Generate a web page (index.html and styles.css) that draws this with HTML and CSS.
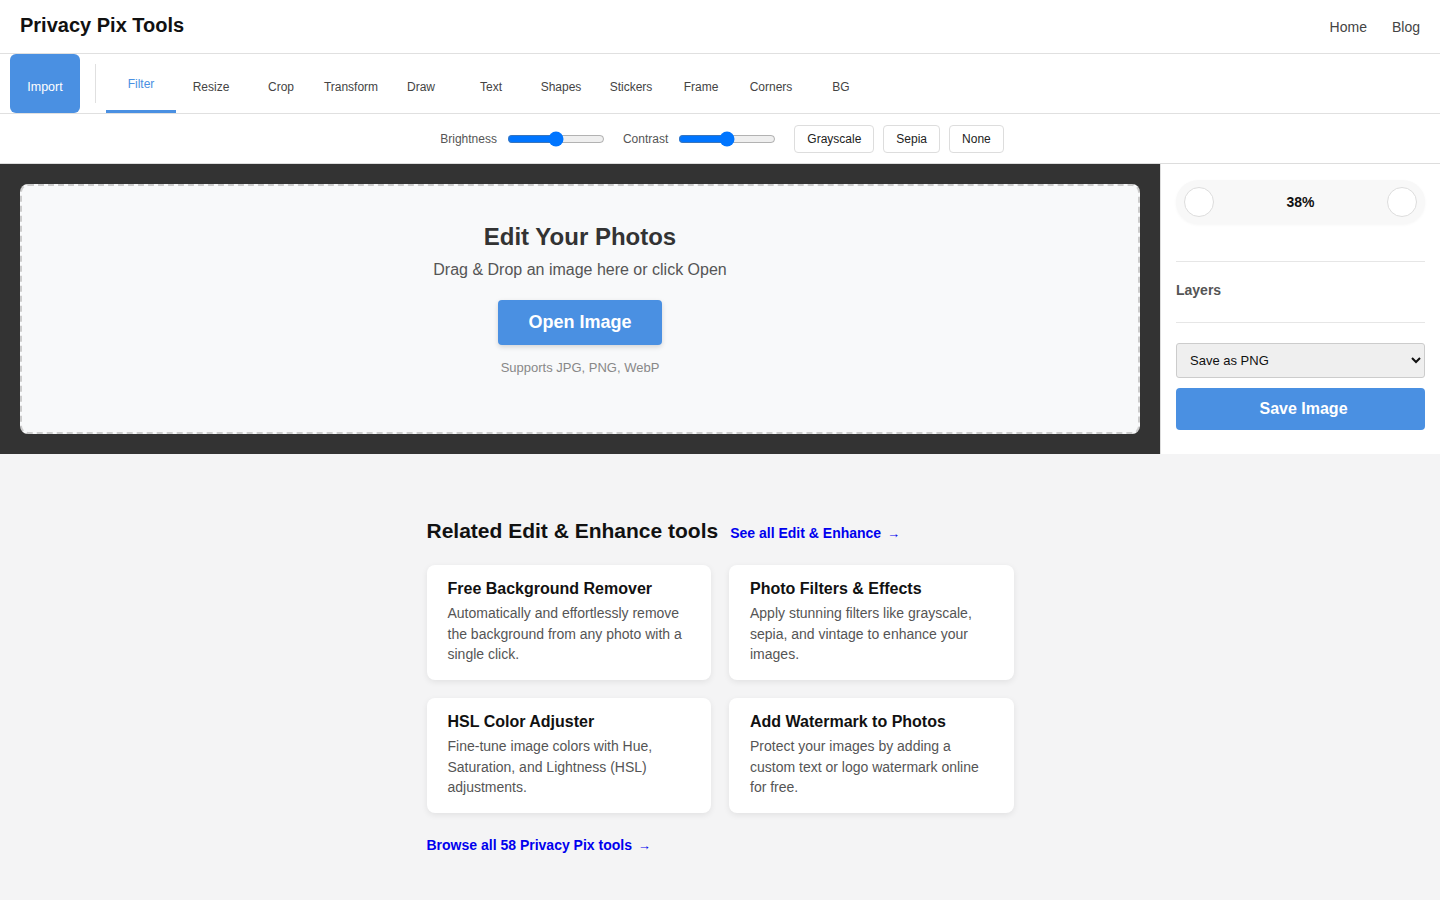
FILE: index.html
```html
<!DOCTYPE html>
<html lang="en">
<head>
  <meta charset="UTF-8">
  <title>Privacy Pix Tools</title>
  <link rel="stylesheet" href="styles.css">
</head>
<body>
  <header class="site-header">
    <div class="brand">Privacy Pix Tools</div>
    <nav class="site-nav">
      <a href="#">Home</a>
      <a href="#">Blog</a>
    </nav>
  </header>

  <div class="toolbar">
    <button class="import-btn">Import</button>
    <div class="tool-sep"></div>
    <div class="tabs">
      <button class="tab active">Filter</button>
      <button class="tab">Resize</button>
      <button class="tab">Crop</button>
      <button class="tab">Transform</button>
      <button class="tab">Draw</button>
      <button class="tab">Text</button>
      <button class="tab">Shapes</button>
      <button class="tab">Stickers</button>
      <button class="tab">Frame</button>
      <button class="tab">Corners</button>
      <button class="tab">BG</button>
    </div>
  </div>

  <div class="filter-bar">
    <label class="filter-label">Brightness</label>
    <input type="range" class="slider" min="0" max="200" value="100">
    <label class="filter-label">Contrast</label>
    <input type="range" class="slider" min="0" max="200" value="100">
    <div class="preset-group">
      <button class="preset">Grayscale</button>
      <button class="preset">Sepia</button>
      <button class="preset">None</button>
    </div>
  </div>

  <main class="editor">
    <section class="canvas-area">
      <div class="dropzone">
        <h2>Edit Your Photos</h2>
        <p class="drop-sub">Drag &amp; Drop an image here or click Open</p>
        <button class="open-btn">Open Image</button>
        <p class="drop-note">Supports JPG, PNG, WebP</p>
      </div>
    </section>
    <aside class="sidebar">
      <div class="zoom-ctrl">
        <button class="zoom-btn"></button>
        <span class="zoom-val">38%</span>
        <button class="zoom-btn"></button>
      </div>
      <div class="layers">Layers</div>
      <select class="format-select">
        <option>Save as PNG</option>
        <option>Save as JPG</option>
        <option>Save as WebP</option>
      </select>
      <button class="save-btn">Save Image</button>
    </aside>
  </main>

  <section class="related">
    <div class="related-inner">
      <div class="related-head">
        <h2>Related Edit &amp; Enhance tools</h2>
        <a href="#" class="see-all">See all Edit &amp; Enhance <span class="arrow">→</span></a>
      </div>
      <div class="cards">
        <a href="#" class="card">
          <h3>Free Background Remover</h3>
          <p>Automatically and effortlessly remove the background from any photo with a single click.</p>
        </a>
        <a href="#" class="card">
          <h3>Photo Filters &amp; Effects</h3>
          <p>Apply stunning filters like grayscale, sepia, and vintage to enhance your images.</p>
        </a>
        <a href="#" class="card">
          <h3>HSL Color Adjuster</h3>
          <p>Fine-tune image colors with Hue, Saturation, and Lightness (HSL) adjustments.</p>
        </a>
        <a href="#" class="card">
          <h3>Add Watermark to Photos</h3>
          <p>Protect your images by adding a custom text or logo watermark online for free.</p>
        </a>
      </div>
      <a href="#" class="browse-all">Browse all 58 Privacy Pix tools <span class="arrow">→</span></a>
    </div>
  </section>
</body>
</html>
```

FILE: styles.css
```css
* {
  box-sizing: border-box;
}

body {
  margin: 0;
  font-family: "Liberation Sans", Arial, sans-serif;
  background-color: #f4f4f5;
  color: #333;
}

button {
  font-family: inherit;
}

.site-header {
  height: 54px;
  display: flex;
  align-items: center;
  justify-content: space-between;
  padding: 0 20px;
  background: #fff;
  border-bottom: 1px solid #e0e0e0;
}

.brand {
  font-size: 20px;
  font-weight: bold;
  color: #111;
  margin-top: -3px;
}

.site-nav {
  display: flex;
  gap: 25px;
}

.site-nav a {
  color: #444;
  text-decoration: none;
  font-size: 14px;
}

.toolbar {
  height: 60px;
  display: flex;
  align-items: stretch;
  background: #fff;
  border-bottom: 1px solid #e0e0e0;
  padding-left: 10px;
}

.import-btn {
  width: 70px;
  background-color: #4a90e2;
  color: #fff;
  border: none;
  border-radius: 6px;
  font-size: 12.5px;
  padding-top: 7px;
  cursor: pointer;
}

.tool-sep {
  width: 1px;
  background: #e0e0e0;
  margin: 10px 10px 10px 15px;
}

.tabs {
  display: flex;
}

.tab {
  width: 70px;
  background: none;
  border: none;
  border-bottom: 3px solid transparent;
  font-size: 12px;
  color: #444;
  padding-top: 10px;
  cursor: pointer;
}

.tab.active {
  color: #4a90e2;
  border-bottom-color: #4a90e2;
  padding-top: 4px;
}

.filter-bar {
  height: 50px;
  display: flex;
  align-items: center;
  justify-content: center;
  gap: 10px;
  background: #fff;
  border-bottom: 1px solid #ddd;
  padding-left: 4px;
}

.filter-label {
  font-size: 12px;
  color: #555;
  margin-left: 8px;
}

.filter-label:first-child {
  margin-left: 0;
}

.slider {
  width: 98px;
  margin: 0;
}

.preset-group {
  display: flex;
  gap: 9px;
  margin-left: 8px;
}

.preset {
  background: #fff;
  border: 1px solid #ddd;
  border-radius: 4px;
  font-size: 12px;
  color: #222;
  height: 28px;
  padding: 0 12px;
  cursor: pointer;
}

.editor {
  display: flex;
  height: 290px;
}

.canvas-area {
  flex: 1;
  background: #333;
  padding: 20px;
}

.dropzone {
  height: 100%;
  background: #f8f9fa;
  border: 2px dashed #ccc;
  border-radius: 8px;
  display: flex;
  flex-direction: column;
  align-items: center;
  padding-top: 37px;
}

.dropzone h2 {
  margin: 0;
  font-size: 24px;
  color: #333;
}

.drop-sub {
  margin: 10px 0 0;
  font-size: 16px;
  color: #555;
}

.open-btn {
  margin-top: 21px;
  width: 164px;
  height: 45px;
  background-color: #4a90e2;
  color: #fff;
  border: none;
  border-radius: 4px;
  font-size: 18px;
  font-weight: bold;
  box-shadow: 0 2px 5px rgba(0,0,0,0.15);
  cursor: pointer;
}

.drop-note {
  margin: 15px 0 0;
  font-size: 13px;
  color: #888;
}

.sidebar {
  width: 280px;
  background: #fff;
  border-left: 1px solid #ddd;
  padding: 16px 15px 0 15px;
  display: flex;
  flex-direction: column;
}

.zoom-ctrl {
  height: 44px;
  background: #f8f8f8;
  border-radius: 22px;
  display: flex;
  align-items: center;
  justify-content: space-between;
  padding: 0 8px;
  box-shadow: 0 1px 3px rgba(0,0,0,0.04);
}

.zoom-btn {
  width: 30px;
  height: 30px;
  border-radius: 50%;
  border: 1px solid #ddd;
  background: #fff;
}

.zoom-val {
  font-size: 14px;
  font-weight: bold;
  color: #111;
}

.layers {
  margin-top: 37px;
  border-top: 1px solid #e6e6e6;
  border-bottom: 1px solid #e6e6e6;
  height: 62px;
  display: flex;
  align-items: center;
  padding-bottom: 5px;
  font-size: 14px;
  font-weight: bold;
  color: #555;
}

.format-select {
  margin-top: 20px;
  height: 35px;
  background: #efefef;
  border: 1px solid #ccc;
  border-radius: 3px;
  font-family: inherit;
  font-size: 13px;
  color: #111;
  padding: 0 9px;
}

.save-btn {
  margin-top: 10px;
  height: 42px;
  background-color: #4a90e2;
  color: #fff;
  border: none;
  border-radius: 4px;
  font-size: 16px;
  font-weight: bold;
  padding-left: 12px;
  cursor: pointer;
}

.related {
  padding: 65px 0 40px;
}

.related-inner {
  width: 587px;
  margin: 0 auto;
}

.related-head {
  display: flex;
  align-items: baseline;
  gap: 12px;
}

.related-head h2 {
  margin: 0;
  font-size: 21px;
  color: #111;
}

.see-all,
.browse-all {
  color: #0000ee;
  font-size: 14px;
  font-weight: bold;
  text-decoration: none;
}

.arrow {
  font-size: 13px;
  margin-left: 2px;
}

.cards {
  display: grid;
  grid-template-columns: 1fr 1fr;
  gap: 18px;
  margin-top: 22px;
}

.card {
  display: block;
  background: #fff;
  border-radius: 8px;
  padding: 15px 21px 16px;
  box-shadow: 0 2px 6px rgba(0,0,0,0.08);
  text-decoration: none;
  height: 115px;
}

.card h3 {
  margin: 0;
  font-size: 16px;
  color: #111;
}

.card p {
  margin: 5px 0 0;
  font-size: 14px;
  line-height: 20.5px;
  color: #555;
}

.browse-all {
  display: inline-block;
  margin-top: 24px;
}
```
